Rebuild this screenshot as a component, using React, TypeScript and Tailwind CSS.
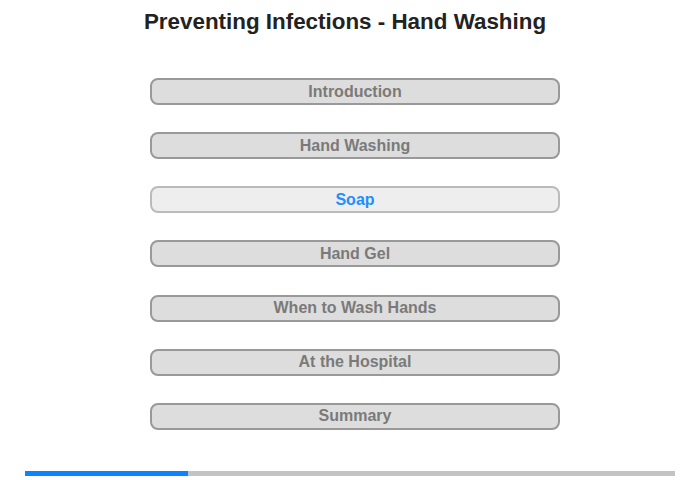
import React from "react";

const items = [
  "Introduction",
  "Hand Washing",
  "Soap",
  "Hand Gel",
  "When to Wash Hands",
  "At the Hospital",
  "Summary",
];

export default function App() {
  return (
    <div
      className="w-[700px] h-[480px] bg-white relative overflow-hidden"
      style={{ fontFamily: '"Liberation Sans", Arial, sans-serif' }}
    >
      <div className="pt-[9px] pr-[10px] text-center text-[22.4px] leading-[26px] font-bold text-[#222]">
        Preventing Infections - Hand Washing
      </div>
      <div className="mt-[43px] flex flex-col gap-[27.15px] pl-[150px]">
        {items.map((t) => {
          const active = t === "Soap";
          return (
            <div
              key={t}
              className={
                active
                  ? "w-[410px] h-[27px] rounded-[8px] border-2 border-[#bbbbbb] bg-[#eeeeee] flex items-center justify-center text-[16px] font-bold text-[#1e8fff]"
                  : "w-[410px] h-[27px] rounded-[8px] border-2 border-[#999999] bg-[#dddddd] flex items-center justify-center text-[16px] font-bold text-[#7a7a7a]"
              }
            >
              {t}
            </div>
          );
        })}
      </div>
      <div className="absolute left-[25px] top-[471px] w-[650px] h-[5px] bg-[#c3c3c3] flex">
        <div className="w-[163px] h-full bg-[#0a84ff]" />
      </div>
    </div>
  );
}
